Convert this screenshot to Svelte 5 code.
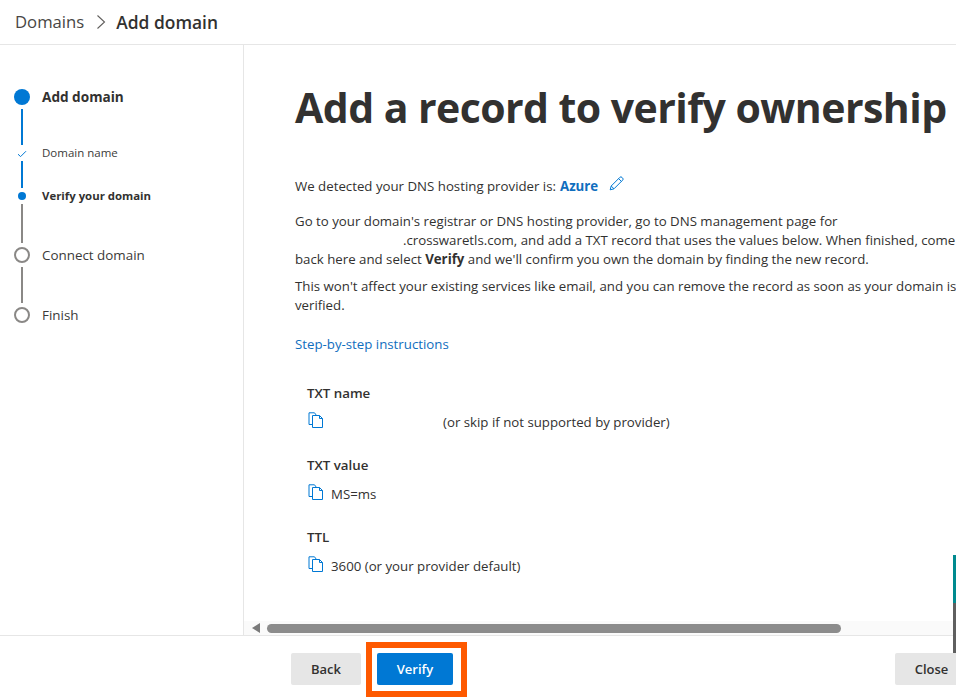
<div class="page">
  <header class="crumbs">
    <span class="crumb">Domains</span>
    <svg class="chev" width="10" height="16" viewBox="0 0 10 16"><path d="M1.5 1.5 8.5 8 1.5 14.5" fill="none" stroke="#605e5c" stroke-width="1.1"/></svg>
    <span class="crumb current">Add domain</span>
  </header>

  <div class="body">
    <aside class="side">
      <div class="step">
        <div class="rail"><span class="dot-big"></span><span class="line blue l1"></span></div>
        <span class="lbl strong">Add domain</span>
      </div>
      <div class="step">
        <div class="rail">
          <svg class="tick" width="10" height="8" viewBox="0 0 10 8"><path d="M1 4.2 3.6 6.6 9 1.2" fill="none" stroke="#0078d4" stroke-width="1"/></svg>
          <span class="line blue l2"></span>
        </div>
        <span class="lbl small">Domain name</span>
      </div>
      <div class="step">
        <div class="rail"><span class="dot-small"></span><span class="line grey l3"></span></div>
        <span class="lbl small strong">Verify your domain</span>
      </div>
      <div class="step">
        <div class="rail"><span class="ring"></span><span class="line grey l4"></span></div>
        <span class="lbl">Connect domain</span>
      </div>
      <div class="step">
        <div class="rail"><span class="ring"></span></div>
        <span class="lbl">Finish</span>
      </div>
    </aside>

    <main class="main">
      <div class="scroll">
        <h1>Add a record to verify ownership</h1>
        <p class="detect">We detected your DNS hosting provider is: <b class="azure">Azure</b>
          <svg class="pencil" width="15" height="15" viewBox="0 0 15 15"><path d="M1.2 13.8 2.2 10 10.8 1.4a1.5 1.5 0 0 1 2.2 0l.6.6a1.5 1.5 0 0 1 0 2.2L5 12.8ZM2.2 10 5 12.8M9.6 2.6l2.8 2.8" fill="none" stroke="#0078d4" stroke-width="1"/></svg>
        </p>
        <p class="para first-para">Go to your domain's registrar or DNS hosting provider, go to DNS management page for<br /><span class="redact"></span>.crosswaretls.com, and add a TXT record that uses the values below. When finished, come<br />back here and select <b>Verify</b> and we'll confirm you own the domain by finding the new record.</p>
        <p class="para">This won't affect your existing services like email, and you can remove the record as soon as your domain is<br />verified.</p>
        <a class="link" href="#top">Step-by-step instructions</a>

        <section class="rec first-rec">
          <h2>TXT name</h2>
          <div class="val">
            {@render copy()}
            <span class="skip">(or skip if not supported by provider)</span>
          </div>
        </section>
        <section class="rec">
          <h2>TXT value</h2>
          <div class="val">{@render copy()}<span>MS=ms</span></div>
        </section>
        <section class="rec">
          <h2>TTL</h2>
          <div class="val">{@render copy()}<span>3600 (or your provider default)</span></div>
        </section>
      </div>
      <div class="hbar">
        <svg class="arrow" width="8" height="10" viewBox="0 0 8 10"><path d="M8 0V10L0 5Z" fill="#7a7a7a"/></svg>
        <span class="thumb"></span>
      </div>
    </main>
  </div>

  <footer class="foot">
    <button class="btn back">Back</button>
    <button class="btn primary">Verify</button>
    <span class="grow"></span>
    <button class="btn close">Close</button>
  </footer>

  <div class="highlight"></div>
  <div class="edge"><span class="teal"></span><span class="dark"></span></div>
</div>

{#snippet copy()}
  <svg class="copy" width="15" height="16" viewBox="0 0 15 16"><path d="M4.5 3.5V15.5H14.5V6.5L11.5 3.5ZM11.5 3.5V6.5H14.5M4.5 12.5H1V.8H6.5L8.5 3.5" fill="none" stroke="#0078d4" stroke-width="1"/></svg>
{/snippet}

<style>
  :global(body) {
    margin: 0;
    background: #fff;
  }
  .page {
    position: relative;
    width: 956px;
    height: 698px;
    overflow: hidden;
    display: flex;
    flex-direction: column;
    font-family: "Open Sans", "Noto Sans", "Liberation Sans", sans-serif;
    color: #323130;
    font-size: 13.25px;
  }
  .crumbs {
    flex: none;
    height: 44px;
    box-sizing: content-box;
    border-bottom: 1px solid #e6e6e6;
    display: flex;
    align-items: center;
    padding-left: 15px;
    font-size: 16.7px;
  }
  .crumb { color: #484644; margin-top: -2px; }
  .crumb.current { color: #323130; font-weight: 600; font-size: 17.4px; margin-top: -1px; }
  .chev { margin: 0 10px 0 12px; }
  .body {
    flex: 1;
    min-height: 0;
    display: flex;
  }
  .side {
    flex: none;
    box-sizing: content-box;
    width: 229px;
    border-right: 1px solid #e6e6e6;
    padding: 44px 0 0 14px;
  }
  .step {
    display: flex;
    align-items: flex-start;
    gap: 12px;
  }
  .rail {
    width: 16px;
    display: flex;
    flex-direction: column;
    align-items: center;
  }
  .dot-big {
    width: 16px; height: 16px; border-radius: 50%; background: #0078d4;
  }
  .dot-small {
    width: 8px; height: 8px; border-radius: 50%; background: #0078d4; margin: 4px 0 0;
  }
  .ring {
    width: 16px; height: 16px; box-sizing: border-box; border-radius: 50%; border: 2px solid #8a8886;
  }
  .tick { margin: 4px 0 0; }
  .line { width: 2px; }
  .line.blue { background: #0078d4; }
  .line.grey { background: #8a8886; }
  .l1 { height: 36px; margin: 4px 0 1px; }
  .l2 { height: 27px; margin: 3px 0 0; }
  .l3 { height: 39px; margin: 4px 0; }
  .l4 { height: 36px; margin: 4px 0; }
  .lbl { line-height: 16px; font-size: 13.4px; color: #3b3a39; }
  .lbl.strong { font-size: 13.6px; font-weight: 700; color: #323130; }
  .lbl.small { font-size: 11.5px; margin-top: -1px; }
  .lbl.small.strong { font-size: 11.4px; margin-top: 0; }
  .main {
    flex: 1;
    min-width: 0;
    position: relative;
    display: flex;
    flex-direction: column;
  }
  .scroll {
    flex: 1;
    min-height: 0;
    overflow: hidden;
    padding: 34px 0 0 51px;
    white-space: nowrap;
  }
  h1 {
    margin: 0;
    font-size: 41px;
    line-height: 56px;
    font-weight: 700;
    color: #323130;
    letter-spacing: -0.55px;
  }
  .detect { margin: 41px 0 0; line-height: 20px; display: flex; align-items: center; gap: 4px; }
  .azure { color: #106ebe; }
  .pencil { margin: -5px 0 0 7px; }
  .para { margin: 8px 0 0; line-height: 19px; }
  .para.first-para { margin-top: 16px; }
  .redact { display: inline-block; width: 108px; }
  .link {
    display: block;
    margin-top: 19px;
    color: #106ebe;
    text-decoration: none;
    line-height: 20px;
  }
  .rec { margin: 0 0 0 12px; padding-top: 23px; }
  .rec.first-rec { padding-top: 29px; }
  .rec h2 { margin: 0; font-size: 13.3px; font-weight: 600; line-height: 20px; color: #323130; }
  .val {
    display: flex;
    align-items: center;
    margin-top: 9px;
    height: 20px;
    gap: 8px;
  }
  .copy { flex: none; margin-top: -5px; margin-left: 1px; }
  .skip { margin-left: 112px; }
  .hbar {
    flex: none;
    height: 14px;
    background: #fafafa;
    display: flex;
    align-items: center;
    padding-left: 8px;
  }
  .arrow { flex: none; }
  .thumb {
    display: block;
    width: 574px;
    height: 9px;
    border-radius: 5px;
    background: #8c8c8c;
    margin-left: 7px;
  }
  .foot {
    flex: none;
    height: 63px;
    border-top: 1px solid #e6e6e6;
    display: flex;
    align-items: flex-start;
    padding: 17px 0 0 291px;
    box-sizing: border-box;
    gap: 16px;
  }
  .btn {
    height: 32px;
    border: none;
    border-radius: 2px;
    font-family: inherit;
    font-size: 13px;
    font-weight: 600;
    padding: 0;
    flex: none;
  }
  .back { width: 70px; background: #e6e6e6; color: #323130; }
  .primary { width: 76px; background: #0078d4; color: #fff; }
  .grow { flex: 1; }
  .close { width: 73px; margin-right: -12px; background: #e6e6e6; color: #323130; }
  .highlight {
    position: absolute;
    left: 366px;
    top: 642px;
    width: 101px;
    height: 55px;
    box-sizing: border-box;
    border: 6px solid #fe5900;
  }
  .edge {
    position: absolute;
    left: 953px;
    top: 555px;
    width: 3px;
    display: flex;
    flex-direction: column;
  }
  .teal { height: 48px; background: #008a8f; }
  .dark { height: 50px; background: #5f5f5f; }
</style>
